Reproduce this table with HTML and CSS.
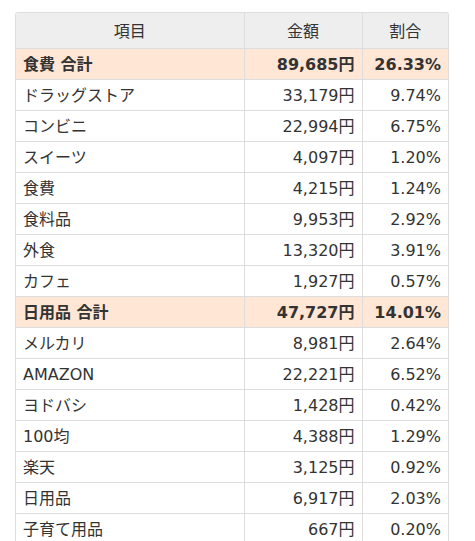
FILE: index.html
```html
<html>

<head>
    <meta charset="utf-8">
    <link rel="stylesheet" href="styles.css">
</head>

<body>
    <div class="tableWrap">
        <table class="summary">
            <colgroup>
                <col class="colName">
                <col class="colAmount">
                <col class="colRate">
            </colgroup>
            <thead>
                <tr>
                    <th>項目</th>
                    <th>金額</th>
                    <th>割合</th>
                </tr>
            </thead>
            <tbody>
                <tr class="total">
                    <td>食費 合計</td>
                    <td class="num">89,685円</td>
                    <td class="num">26.33%</td>
                </tr>
                <tr>
                    <td>ドラッグストア</td>
                    <td class="num">33,179円</td>
                    <td class="num">9.74%</td>
                </tr>
                <tr>
                    <td>コンビニ</td>
                    <td class="num">22,994円</td>
                    <td class="num">6.75%</td>
                </tr>
                <tr>
                    <td>スイーツ</td>
                    <td class="num">4,097円</td>
                    <td class="num">1.20%</td>
                </tr>
                <tr>
                    <td>食費</td>
                    <td class="num">4,215円</td>
                    <td class="num">1.24%</td>
                </tr>
                <tr>
                    <td>食料品</td>
                    <td class="num">9,953円</td>
                    <td class="num">2.92%</td>
                </tr>
                <tr>
                    <td>外食</td>
                    <td class="num">13,320円</td>
                    <td class="num">3.91%</td>
                </tr>
                <tr>
                    <td>カフェ</td>
                    <td class="num">1,927円</td>
                    <td class="num">0.57%</td>
                </tr>
                <tr class="total">
                    <td>日用品 合計</td>
                    <td class="num">47,727円</td>
                    <td class="num">14.01%</td>
                </tr>
                <tr>
                    <td>メルカリ</td>
                    <td class="num">8,981円</td>
                    <td class="num">2.64%</td>
                </tr>
                <tr>
                    <td>AMAZON</td>
                    <td class="num">22,221円</td>
                    <td class="num">6.52%</td>
                </tr>
                <tr>
                    <td>ヨドバシ</td>
                    <td class="num">1,428円</td>
                    <td class="num">0.42%</td>
                </tr>
                <tr>
                    <td>100均</td>
                    <td class="num">4,388円</td>
                    <td class="num">1.29%</td>
                </tr>
                <tr>
                    <td>楽天</td>
                    <td class="num">3,125円</td>
                    <td class="num">0.92%</td>
                </tr>
                <tr>
                    <td>日用品</td>
                    <td class="num">6,917円</td>
                    <td class="num">2.03%</td>
                </tr>
                <tr>
                    <td>子育て用品</td>
                    <td class="num">667円</td>
                    <td class="num">0.20%</td>
                </tr>
            </tbody>
        </table>
    </div>
</body>
</html>
```

FILE: styles.css
```css
body {
    margin: 0;
    padding: 12px 26px 0 15px;
    background-color: #ffffff;
    font-family: "DejaVu Sans", "Noto Sans CJK JP", sans-serif;
    font-size: 13px;
    color: #333333;
}

.tableWrap {
    width: 434px;
    border: 1px solid #dddddd;
    border-bottom: none;
    border-radius: 3px 3px 0 0;
    overflow: hidden;
    box-sizing: border-box;
}

.summary {
    width: 100%;
    border-collapse: collapse;
    table-layout: fixed;
}

.colName {
    width: 228px;
}

.colAmount {
    width: 118px;
}

.colRate {
    width: auto;
}

.summary th {
    height: 35px;
    padding: 0 7px;
    background-color: #eeeeee;
    font-weight: normal;
    text-align: center;
    border-bottom: 1px solid #dddddd;
    border-left: 1px solid #dddddd;
    box-sizing: border-box;
}

.summary td {
    height: 31px;
    padding: 2px 7px 0;
    line-height: 16px;
    border-bottom: 1px solid #dddddd;
    border-left: 1px solid #dddddd;
    box-sizing: border-box;
}

.summary th:first-child,
.summary td:first-child {
    border-left: none;
}

.summary .num {
    text-align: right;
}

.summary .total td {
    background-color: #ffe6d5;
    font-weight: bold;
}
```
